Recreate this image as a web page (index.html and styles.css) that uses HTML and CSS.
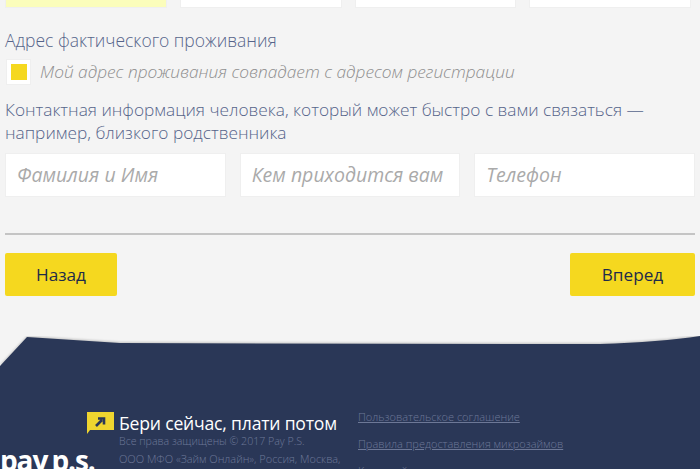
FILE: index.html
```html
<!DOCTYPE html>
<html lang="ru">
<head>
<meta charset="utf-8">
<title>Pay P.S.</title>
<link rel="stylesheet" href="styles.css">
</head>
<body>
<main class="form">
  <div class="top-row">
    <div class="box box-active"></div>
    <div class="box"></div>
    <div class="box"></div>
    <div class="box"></div>
  </div>
  <h2 class="title title-address">Адрес фактического проживания</h2>
  <label class="check">
    <span class="check-box"><span class="check-mark"></span></span>
    <span class="check-text">Мой адрес проживания совпадает с адресом регистрации</span>
  </label>
  <p class="title title-contact">Контактная информация человека, который может быстро с вами связаться — например, близкого родственника</p>
  <div class="fields">
    <div class="field">Фамилия и Имя</div>
    <div class="field">Кем приходится вам</div>
    <div class="field">Телефон</div>
  </div>
  <hr class="rule">
  <div class="buttons">
    <a class="btn btn-back">Назад</a>
    <a class="btn btn-next">Вперед</a>
  </div>
</main>
<footer class="footer">
  <svg class="footer-edge" viewBox="0 0 700 30" width="700" height="30" preserveAspectRatio="none" aria-hidden="true">
    <path class="edge-fill" d="M0 30 L27 1 L120 7 Q360 8 600 8 Q660 6 700 0 V30 Z"/>
  </svg>
  <div class="footer-body">
    <div class="logo">pay p.s.</div>
    <div class="about">
      <div class="slogan">
        <svg class="slogan-icon" viewBox="0 0 27 22" width="27" height="22" aria-hidden="true">
          <path d="M0 0H27V18H3L0 22Z" fill="#efd52f"/>
          <path d="M9 14 L15 8 M11 6.500H17V12.500" fill="none" stroke="#2a3757" stroke-width="2.600"/>
        </svg>
        <span>Бери сейчас, плати потом</span>
      </div>
      <p class="legal legal-rights">Все права защищены © 2017 Pay P.S.</p>
      <p class="legal legal-org">ООО МФО «Займ Онлайн», Россия, Москва,<br>123001, ул. Спиридоновка, д.27/24</p>
    </div>
    <nav class="links">
      <a>Пользовательское соглашение</a>
      <a>Правила предоставления микрозаймов</a>
      <a class="plain">Карта сайта</a>
    </nav>
  </div>
</footer>
</body>
</html>
```
FILE: styles.css
```css
* { box-sizing: border-box; }
html, body { margin: 0; height: 469px; overflow: hidden; }
body {
  background: #f4f4f4;
  font-family: "Open Sans", sans-serif;
  color: #56648a;
  width: 700px;
}
.form { padding: 0 5px; height: 336px; }
.top-row { display: flex; gap: 13px; width: 686px; }
.box {
  flex: 1;
  height: 8px;
  background: #fff;
  border: 1px solid #efefef;
  border-top: 0;
}
.box-active { background: #fbfdbb; }
.title { margin: 0; font-weight: 300; font-size: 17.3px; line-height: 23px; color: #56648a; }
.title-address { padding-top: 21px; font-size: 17.5px; }
.check { display: flex; align-items: center; gap: 9px; margin-top: 7px; margin-left: 1px; }
.check-box {
  width: 25px; height: 26px; background: #fff; border: 1px solid #efefef;
  display: flex; align-items: center; justify-content: center;
}
.check-mark { width: 16px; height: 16px; background: #f5d81f; }
.check-text { font-style: italic; font-weight: 300; font-size: 17.3px; line-height: 24px; color: #8e8e8e; margin-top: -1px; }
.title-contact { margin-top: 13px; width: 680px; }
.fields { display: flex; gap: 14px; margin-top: 9px; width: 690px; }
.field {
  height: 44px; flex: 1 1 0; background: #fff; border: 1px solid #efefef;
  padding-left: 11px; font-size: 19.5px; line-height: 42px; font-style: italic; color: #aaa;
}
.rule { border: 0; height: 2px; background: #c4c4c4; margin: 36px 0 0; width: 690px; }
.buttons { display: flex; justify-content: space-between; margin-top: 18px; width: 690px; }
.btn {
  height: 43px; background: #f5d81f; border-radius: 2px; color: #1e2b4a;
  font-size: 17.2px; line-height: 43px; text-align: center;
}
.btn-back { width: 112px; }
.btn-next { width: 125px; }
.footer { height: 133px; display: flex; flex-direction: column; }
.footer-edge { display: block; flex: none; }
.edge-fill { fill: #2a3757; filter: drop-shadow(0 -1px 1px rgba(0, 0, 0, .2)); }
.footer-body {
  flex: 1; background: #2a3757; display: flex; align-items: flex-start;
  padding-top: 46px; overflow: hidden;
}
.logo {
  width: 87px; margin-top: 28px; flex: none;
  font-size: 28px; font-weight: 700; line-height: 40px; letter-spacing: -1.1px; word-spacing: -2px; color: #fff;
  white-space: nowrap;
}
.about { width: 271px; flex: none; }
.slogan { display: flex; align-items: center; gap: 5px; color: #fff; font-size: 17.6px; font-weight: 400; line-height: 20px; white-space: nowrap; }
.slogan-icon { flex: none; }
.slogan span { letter-spacing: -0.2px; }
.legal { margin: 0 0 0 32px; font-weight: 300; color: #6d7897; white-space: nowrap; }
.legal-rights { font-size: 10.6px; line-height: 14px; margin-top: 0; }
.legal-org { font-size: 10.95px; line-height: 15px; margin-top: 3px; }
.links { display: flex; flex-direction: column; gap: 10px; margin-top: -4px; }
.links a { font-size: 11px; font-weight: 300; line-height: 17px; color: #6d7897; text-decoration: underline; white-space: nowrap; }
.links a.plain { text-decoration: none; }
```
